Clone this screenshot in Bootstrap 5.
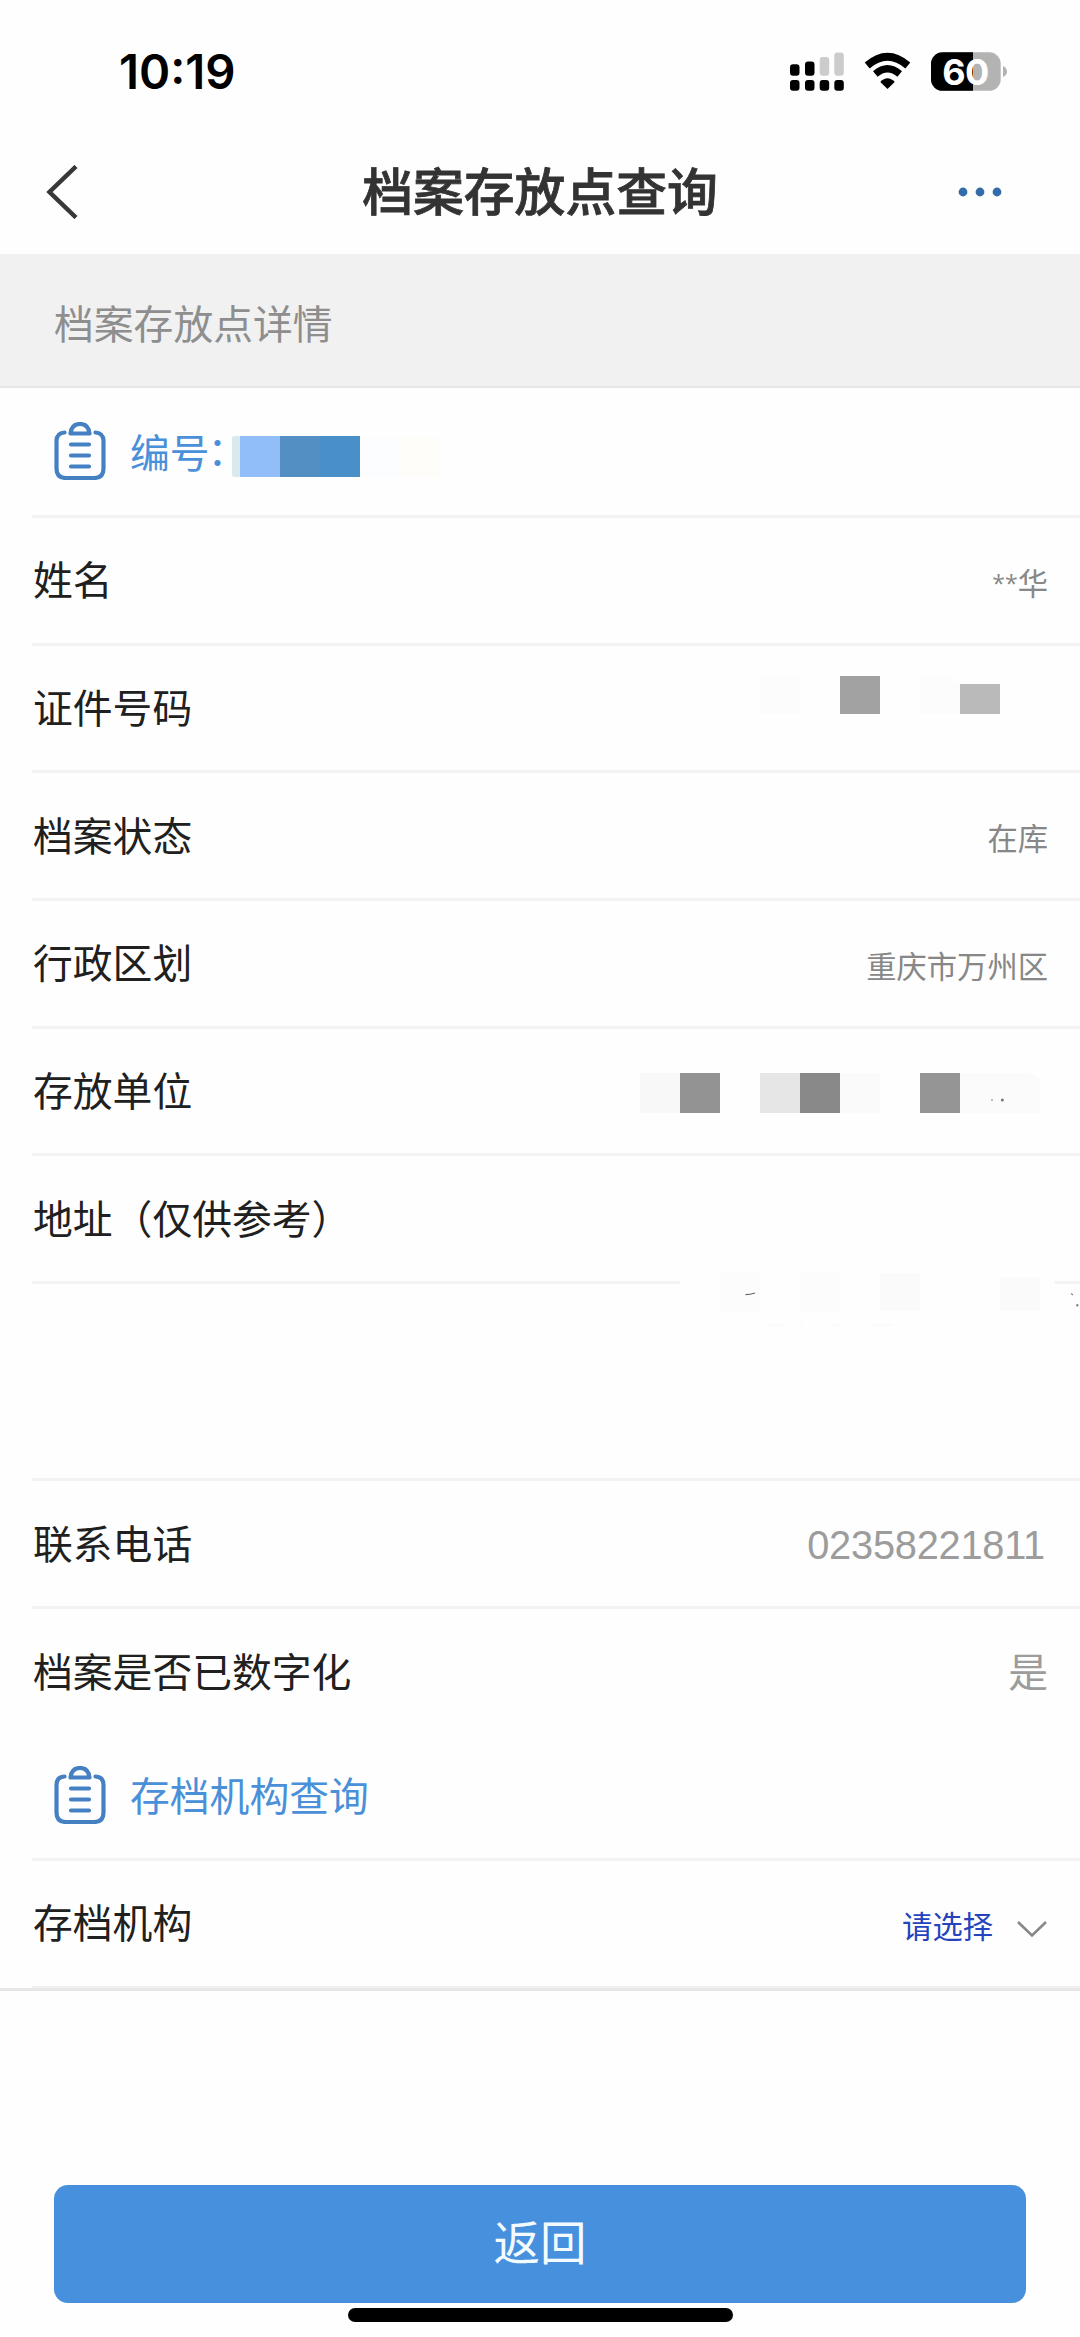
<!DOCTYPE html>
<html lang="zh-CN">
<head>
<meta charset="utf-8">
<meta name="viewport" content="width=device-width, initial-scale=1">
<title>档案存放点查询</title>
<link href="https://cdn.jsdelivr.net/npm/bootstrap@5.3.0/dist/css/bootstrap.min.css" rel="stylesheet">
<style>
body{background:#fefefe;color:#202020;font-family:"Liberation Sans","Noto Sans CJK SC",sans-serif;font-size:39.8px;line-height:1}
.screen{width:1080px;height:2337px;overflow:hidden}
svg{display:block;flex:none}
.statusbar{height:130px;padding:51px 73px 0 119px}
.clock{font:600 47.3px/42px Inter,sans-serif;color:#000}
.battery-num{font:700 36px Inter,sans-serif;letter-spacing:-.5px}
.titlebar{height:124px;padding:0 78px 0 46px}
.titlebar h1{font:500 50.8px/1 "Noto Sans CJK SC",sans-serif;color:#333;-webkit-text-stroke:.8px #333;padding-bottom:6px}
.back{width:76px}
.crumb{height:134px;background:#f1f1f1;color:#8e8e8e;padding:11px 53px 0 54px;border-bottom:2px solid #e5e5e5}
.sect{height:127px;color:#4a90d9;padding:0 0 0 54px}
.sect svg:first-child{margin-bottom:2px}
.sect-title{margin-left:24px;padding-top:3px}
.colon{display:inline-block;width:24px;margin-left:-2px;white-space:nowrap;font-family:"Noto Sans CJK SC",sans-serif;line-height:1;transform:translateY(-3px)}
.sect-b{height:124px}
.sect-b .sect-title{padding-top:4px}
.code-mosaic{margin-top:10px}
.cells{margin-left:32px}
.cells .list-group-item{height:127.67px;border:0;border-top:3px solid #f2f2f2;background:transparent;padding:0 32px 0 1px;color:inherit}
.cells .lbl{padding-top:4px}
.cells .val{font-size:30.3px;color:#878787;padding-top:9px}
.cells .val-lg{font-size:39.8px;color:#9c9c9c;padding-top:4px}
.cells .phone{padding-right:3px;letter-spacing:-.25px}
.stars{font-family:"Open Sans",sans-serif;font-size:23px;vertical-align:3px;line-height:0}
.cells .tall{height:197.5px;border-top-color:transparent}
.cells .picker{color:#2443bd;gap:23px;padding-top:11px}
.mosaic-over{top:-13px;left:0}
.endline{height:5px;margin-top:1px;border-bottom:3px solid #e7e7e7}
.endline div{margin-left:32px;height:2px;background:#f0f0f0}
.dock{padding-bottom:15px}
.btn-back{width:972px;height:118px;border-radius:14px;background:#4690de;color:#f4fbff;font-size:46.5px;border:0;padding:8px 0 6px;--bs-btn-hover-bg:#4690de}
.homebar{width:385px;height:14px;border-radius:7px;background:#000;margin-top:5px}
</style>
<script src="https://cdn.jsdelivr.net/npm/bootstrap@5.3.0/dist/js/bootstrap.bundle.min.js"></script>
</head>
<body>
<svg width="0" height="0" class="position-absolute"><defs>
<symbol id="clip" viewBox="0 0 52 58"><g fill="none" stroke="#4580c2" stroke-width="4.200" stroke-linecap="round" stroke-linejoin="round"><path d="M10.500 10.500Q2.500 11 2.500 19V46.500Q2.500 56 12 56H40Q49.500 56 49.500 46.500V19Q49.500 11 41.500 10.500"/><path d="M16.500 11.500Q17.500 2 26 2T35.500 11.500Z"/><path d="M17 22.500H35M17 33.500H35M17 44.500H35"/></g></symbol>
</defs></svg>
<div class="screen d-flex flex-column">
  <div class="statusbar d-flex justify-content-between align-items-start">
    <div class="clock">10:19</div>
    <svg width="218" height="42" viewBox="789 51 218 42">
      <g fill="#000"><rect x="790" y="64.300" width="9.500" height="11.500" rx="3"/><rect x="805" y="61.600" width="9.500" height="14.200" rx="3"/><rect x="790" y="80" width="9.500" height="10.700" rx="3"/><rect x="805" y="80" width="9.500" height="10.700" rx="3"/><rect x="819.700" y="80" width="9.500" height="10.700" rx="3"/><rect x="834.300" y="80" width="9.500" height="10.700" rx="3"/></g>
      <g fill="#ccc"><rect x="819.700" y="57" width="9.500" height="18.800" rx="3"/><rect x="834.300" y="52.600" width="9.500" height="23.200" rx="3"/></g>
      <path d="M867.200 65.500Q887.500 48 907.800 65.500" fill="none" stroke="#000" stroke-width="7.600"/>
      <path d="M875.300 74Q887.500 63.500 899.700 74" fill="none" stroke="#000" stroke-width="7"/>
      <path d="M880.300 82Q887.500 74.500 894.700 82L887.500 89Z"/>
      <rect x="931" y="52.300" width="69.700" height="38.500" rx="11.500" fill="#b3b3b3"/>
      <path d="M973 52.300H942.500A11.500 11.500 0 0 0 931 63.800V79.300A11.500 11.500 0 0 0 942.500 90.800H973Z"/>
      <path d="M1003 66Q1007 68 1007 71.500T1003 77Z" fill="#b3b3b3"/>
      <text class="battery-num" x="965.500" y="84.500" text-anchor="middle" fill="#fff">60</text>
    </svg>
  </div>
  <div class="titlebar d-flex justify-content-between align-items-center">
    <div class="back"><svg width="32" height="54" viewBox="0 0 32 54"><path d="M30 1.500L3.500 27L30 52.500" fill="none" stroke="#383838" stroke-width="4.500"/></svg></div>
    <h1 class="m-0">档案存放点查询</h1>
    <svg width="44" height="10" viewBox="0 0 44 10" fill="#336ca9"><circle cx="5" cy="5" r="4.400"/><circle cx="22" cy="5" r="4.400"/><circle cx="39" cy="5" r="4.400"/></svg>
  </div>
  <div class="crumb d-flex align-items-center">档案存放点详情</div>

  <div class="sect d-flex align-items-center">
    <svg width="52" height="58"><use href="#clip"/></svg>
    <span class="sect-title">编号<span class="colon">：</span></span>
    <svg width="208" height="41" viewBox="232 0 208 41" class="code-mosaic" shape-rendering="crispEdges"><path d="M240 0H235Q232 0 232 3V38Q232 41 235 41H240Z" fill="#d9e9ee"/><path d="M240 0h40v41h-40z" fill="#91bdf8"/><path d="M280 0h40v41h-40z" fill="#538fc2"/><path d="M320 0h40v41h-40z" fill="#4a90c8"/><path d="M360 0h40v41h-40z" fill="#fbfdfe"/><path d="M400 0h40v41h-40z" fill="#fffdfa"/></svg>
  </div>

  <div class="cells list-group list-group-flush rounded-0">
    <div class="list-group-item d-flex justify-content-between align-items-center"><span class="lbl">姓名</span><span class="val"><span class="stars">**</span>华</span></div>
    <div class="list-group-item d-flex justify-content-between align-items-center"><span class="lbl">证件号码</span>
      <svg width="288" height="64" viewBox="760 676 288 64" shape-rendering="crispEdges"><path d="M760 676h40v38h-40z" fill="#fcfcfc"/><path d="M840 676h40v38h-40z" fill="#a2a2a2"/><path d="M920 676h28l12 8v30h-40z" fill="#fcfcfc"/><path d="M960 684h40v30h-40z" fill="#bababa"/></svg></div>
    <div class="list-group-item d-flex justify-content-between align-items-center"><span class="lbl">档案状态</span><span class="val">在库</span></div>
    <div class="list-group-item d-flex justify-content-between align-items-center"><span class="lbl">行政区划</span><span class="val">重庆市万州区</span></div>
    <div class="list-group-item d-flex justify-content-between align-items-center"><span class="lbl">存放单位</span>
      <svg width="408" height="40" viewBox="640 0 408 40" class="mt-1"><g shape-rendering="crispEdges"><path d="M640 0h40v40h-40z" fill="#f8f8f8"/><path d="M680 0h40v40h-40z" fill="#939393"/><path d="M760 0h40v40h-40z" fill="#e6e6e6"/><path d="M800 0h40v40h-40z" fill="#898989"/><path d="M840 0h40v40h-40z" fill="#fafafa"/><path d="M920 0h40v40h-40z" fill="#959595"/><path d="M960 0h70l10 5v35h-80z" fill="#fbfbfb"/></g><circle cx="992" cy="27" r="1" fill="#aaa"/><circle cx="1002.300" cy="27" r="1.500" fill="#777"/></svg></div>
    <div class="list-group-item d-flex justify-content-between align-items-center"><span class="lbl">地址（仅供参考）</span></div>
    <div class="list-group-item tall">
      <svg class="mosaic-over position-absolute" width="1048" height="70" viewBox="32 1270 1048 70">
        <path d="M32 1280h648v3h-648zM1055 1280h25v3h-25z" fill="#f2f2f2"/>
        <g shape-rendering="crispEdges"><path d="M720 1272h40v38h-40zM800 1272h40v38h-40z" fill="#fcfcfc"/><path d="M880 1272h40v38h-40zM1000 1276h40v34h-40z" fill="#fafafa"/></g>
        <path d="M745.500 1293.600Q750 1293.500 755 1292" fill="none" stroke="#666" stroke-width="1.300"/>
        <path d="M770 1324h12M798 1324h5M833 1324h7M870 1324h22" stroke="#fafafa" stroke-width="2"/>
        <path d="M1071 1292.500l2 1.500" stroke="#888" stroke-width="1.200"/><circle cx="1077.300" cy="1304.300" r="1.200" fill="#888"/>
      </svg>
    </div>
    <div class="list-group-item d-flex justify-content-between align-items-center"><span class="lbl">联系电话</span><span class="val val-lg phone">02358221811</span></div>
    <div class="list-group-item d-flex justify-content-between align-items-center"><span class="lbl">档案是否已数字化</span><span class="val val-lg">是</span></div>
  </div>

  <div class="sect sect-b d-flex align-items-center">
    <svg width="52" height="58"><use href="#clip"/></svg>
    <span class="sect-title">存档机构查询</span>
  </div>
  <div class="cells list-group list-group-flush rounded-0">
    <div class="list-group-item d-flex justify-content-between align-items-center"><span class="lbl">存档机构</span>
      <span class="val picker d-flex align-items-center">请选择<svg width="32" height="18" viewBox="0 0 32 18"><path d="M2 2L16 15.500L30 2" fill="none" stroke="#888" stroke-width="2.600"/></svg></span></div>
  </div>
  <div class="endline"><div></div></div>
  <div class="dock mt-auto d-flex flex-column align-items-center">
    <button class="btn btn-back" type="button">返回</button>
    <div class="homebar"></div>
  </div>
</div>
</body>
</html>
